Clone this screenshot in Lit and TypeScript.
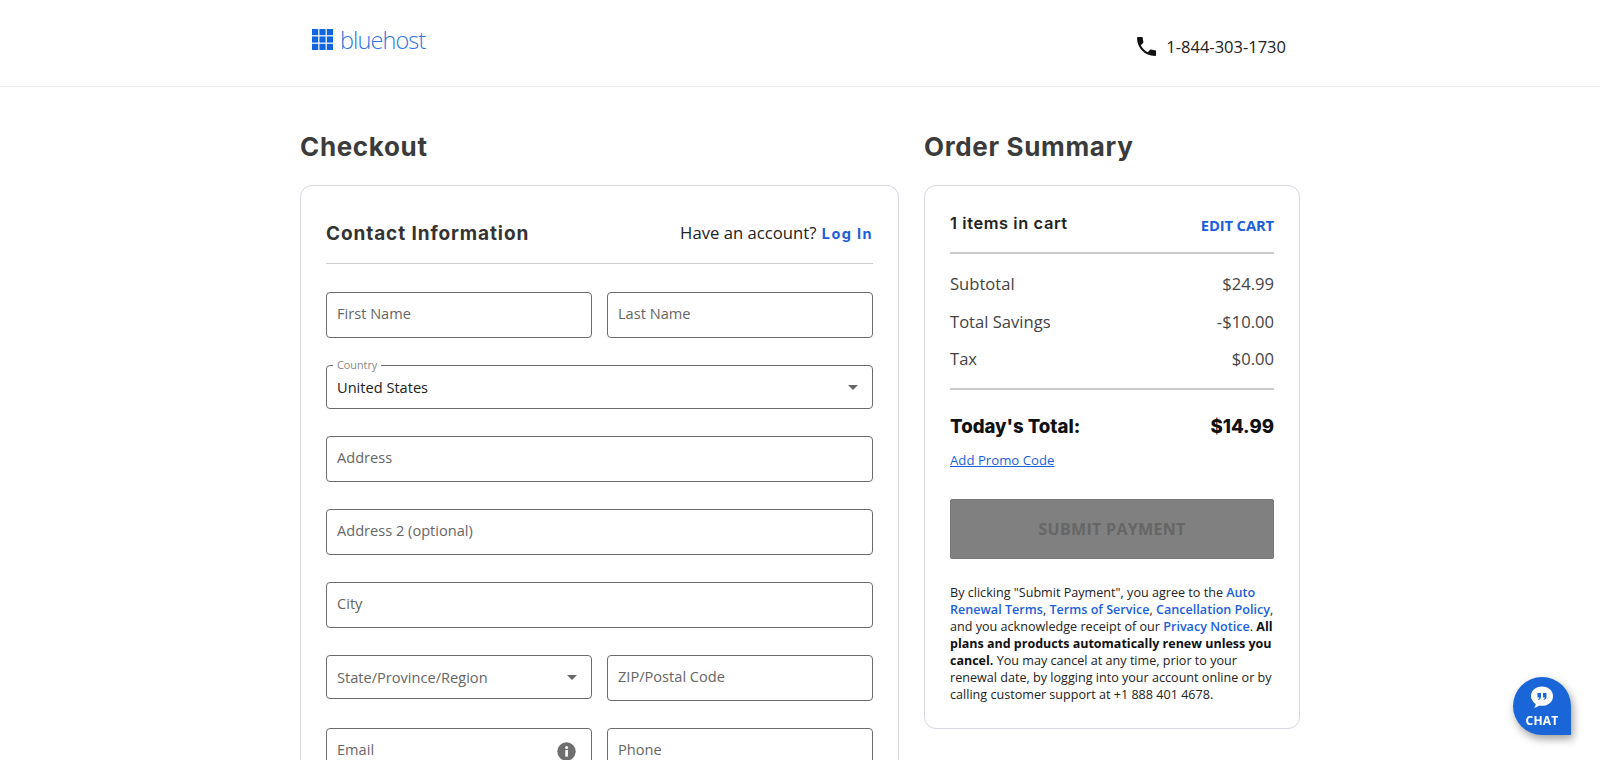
import { LitElement, html, svg, css } from "lit";
import { customElement } from "lit/decorators.js";

@customElement("app-root")
export class AppRoot extends LitElement {
  static styles = css`
    :host { display: block; height: 760px; overflow: hidden; background: #fff; font-family: "Open Sans", sans-serif; color: #333; }
    * { box-sizing: border-box; }
    .top { height: 87px; border-bottom: 1px solid #ebebf3; display: block; }
    .top-in { width: 1000px; margin: 0 auto; display: flex; justify-content: space-between; padding: 29px 14px 0 12px; }
    .logo { display: flex; gap: 7px; align-items: flex-start; }
    .logo svg { display: block; }
    .brand { font-family: "Open Sans", sans-serif; font-weight: 300; font-size: 23.5px; line-height: 22px; color: #2f76df; letter-spacing: -0.9px; }
    .phone { display: flex; align-items: center; gap: 10px; font-size: 16.5px; color: #222; height: 20px; margin-top: 7px; }
    .main { width: 1000px; margin: 0 auto; display: grid; grid-template-columns: 599px 376px; gap: 25px; padding-top: 41px; align-items: start; }
    h1 { margin: 0 0 20px; font-family: "Inter", sans-serif; font-weight: 700; font-size: 26px; line-height: 37px; color: #3b3b3b; letter-spacing: 0.65px; }
    .card { border: 1px solid #d6d6e2; border-radius: 12px; background: #fff; }
    .contact { padding: 33px 25px 40px; height: 700px; }
    .chead { display: flex; justify-content: space-between; align-items: center; height: 30px; padding-bottom: 2px; }
    h2 { margin: 0; font-family: "Inter", sans-serif; font-weight: 700; font-size: 19px; color: #333; letter-spacing: 0.9px; }
    .have { font-size: 16.7px; color: #222; margin-bottom: 2px; }
    .have a { font-family: "Inter", sans-serif; font-weight: 700; font-size: 14.5px; color: #1b5fdc; letter-spacing: 1.4px; margin-left: 1px; }
    .rule { height: 1px; background: #cfcfcf; margin: 14px 0 28px; }
    .form { display: flex; flex-direction: column; gap: 27px; }
    .row { display: grid; grid-template-columns: 265.5px 266px; gap: 15.5px; align-items: start; }
    .f { position: relative; height: 46px; border: 1px solid #6b6b6b; border-radius: 4px; display: flex; align-items: center; padding: 0 10px 4px; font-size: 14.6px; color: #666; }
    .short { height: 44px; padding-bottom: 0; }
    .value { color: #222; padding-bottom: 1px; }
    .legend { position: absolute; top: -8px; left: 6px; background: #fff; padding: 0 4px; font-size: 10.8px; line-height: 14px; color: #888; }
    .arrow { position: absolute; right: 14px; top: 50%; margin-top: -2px; width: 0; height: 0; border-left: 5.5px solid transparent; border-right: 5.5px solid transparent; border-top: 5.5px solid #666; }
    .info { position: absolute; right: 15px; top: 13px; }
    .summary { height: 544px; padding: 0 25px; }
    .shead { display: flex; justify-content: space-between; height: 68px; padding-top: 26px; border-bottom: 2px solid #cacaca; }
    .shead b { font-family: "Inter", sans-serif; font-weight: 600; font-size: 16.4px; line-height: 22px; color: #222; letter-spacing: 0.6px; }
    .shead a { font-weight: 700; font-size: 14.8px; color: #1b5fdc; line-height: 26px; letter-spacing: -0.15px; }
    .lines { padding-top: 11px; border-bottom: 2px solid #cacaca; height: 136px; }
    .line { display: flex; justify-content: space-between; font-size: 16.6px; color: #444; height: 37.5px; align-items: center; }
    .total { display: flex; justify-content: space-between; align-items: center; height: 71px; font-family: "Inter", sans-serif; font-weight: 800; font-size: 18.6px; color: #111; }
    .promo { display: block; font-size: 13.2px; line-height: 18px; color: #1b5fdc; text-decoration: underline; margin-top: -10px; }
    .submit { height: 60px; margin-top: 29.5px; background: #808080; border: 1px solid #777; border-radius: 2px; display: flex; align-items: center; justify-content: center; font-weight: 700; font-size: 16px; letter-spacing: 0.3px; color: #666; }
    .legal { margin: 25px 0 0; font-size: 12.6px; line-height: 17.1px; color: #222; }
    .legal a { color: #1b5fdc; font-weight: 580; }
    .legal b { color: #111; font-weight: 700; font-size: 12.5px; }
    .chat { position: fixed; left: 1513px; top: 677px; width: 58px; height: 58px; background: #1a66d9; border-radius: 50% 50% 0 50%; box-shadow: 2px 4px 8px rgba(0,0,0,.38); display: flex; flex-direction: column; align-items: center; color: #fff; font-weight: 700; font-size: 12px; letter-spacing: .2px; padding-top: 8px; }
    .chat svg { display: block; margin-bottom: 3px; }
  `;

  private logoCells() {
    const c = [];
    for (const y of [0, 7.4, 14.8]) for (const x of [0, 7.4, 14.8]) c.push(svg`<rect x=${x} y=${y} width="6.2" height="6.2" fill="#1166e0"></rect>`);
    return c;
  }

  render() {
    return html`
      <header class="top">
        <div class="top-in">
          <div class="logo">
            <svg width="21" height="21" viewBox="0 0 21 21">${this.logoCells()}</svg>
            <span class="brand">bluehost</span>
          </div>
          <div class="phone">
            <svg width="19" height="19" viewBox="3 3 18 18"><path fill="#111" d="M6.62 10.79c1.44 2.83 3.76 5.14 6.59 6.59l2.2-2.2c.27-.27.67-.36 1.02-.24 1.12.37 2.33.57 3.57.57.55 0 1 .45 1 1V20c0 .55-.45 1-1 1-9.39 0-17-7.61-17-17 0-.55.45-1 1-1h3.5c.55 0 1 .45 1 1 0 1.25.2 2.45.57 3.57.11.35.03.74-.25 1.02l-2.2 2.2z"/></svg>
            <span>1-844-303-1730</span>
          </div>
        </div>
      </header>
      <main class="main">
        <section>
          <h1>Checkout</h1>
          <div class="card contact">
            <div class="chead">
              <h2>Contact Information</h2>
              <span class="have">Have an account? <a>Log In</a></span>
            </div>
            <div class="rule"></div>
            <div class="form">
              <div class="row">
                <div class="f">First Name</div>
                <div class="f">Last Name</div>
              </div>
              <div class="f short value"><span class="legend">Country</span><span>United States</span><i class="arrow"></i></div>
              <div class="f">Address</div>
              <div class="f">Address 2 (optional)</div>
              <div class="f">City</div>
              <div class="row">
                <div class="f short">State/Province/Region<i class="arrow"></i></div>
                <div class="f">ZIP/Postal Code</div>
              </div>
              <div class="row">
                <div class="f">Email
                  <svg class="info" width="19" height="19" viewBox="0 0 19 19"><circle cx="9.5" cy="9.5" r="9.2" fill="#6e6e6e"/><rect x="8.3" y="8" width="2.6" height="6.6" fill="#fff"/><circle cx="9.6" cy="5.4" r="1.5" fill="#fff"/></svg>
                </div>
                <div class="f">Phone</div>
              </div>
            </div>
          </div>
        </section>
        <section>
          <h1>Order Summary</h1>
          <div class="card summary">
            <div class="shead"><b>1 items in cart</b><a>EDIT CART</a></div>
            <div class="lines">
              <div class="line"><span>Subtotal</span><span>$24.99</span></div>
              <div class="line"><span>Total Savings</span><span>-$10.00</span></div>
              <div class="line"><span>Tax</span><span>$0.00</span></div>
            </div>
            <div class="total"><span>Today's Total:</span><span>$14.99</span></div>
            <a class="promo">Add Promo Code</a>
            <div class="submit">SUBMIT PAYMENT</div>
            <p class="legal">By clicking "Submit Payment", you agree to the <a>Auto Renewal Terms</a>, <a>Terms of Service</a>, <a>Cancellation Policy</a>, and you acknowledge receipt of our <a>Privacy Notice</a>. <b>All plans and products automatically renew unless you cancel.</b> You may cancel at any time, prior to your renewal date, by logging into your account online or by calling customer support at +1 888 401 4678.</p>
          </div>
        </section>
      </main>
      <div class="chat">
        <svg width="24" height="24" viewBox="0 0 24 24"><path fill="#fff" d="M12 1.500c6.100 0 11 3.900 11 9.700s-4.900 9.600-11 9.600c-.9 0-1.800-.1-2.600-.2-1.600 1.300-3.400 2-5.400 2.200 1-1.100 1.600-2.400 1.700-3.900C3 17 1 14.400 1 11.200 1 5.400 5.900 1.500 12 1.500z"/><path fill="#1a66d9" d="M7.500 8h3.500v3.500c0 1.800-.9 3-2.600 3.500l-.4-1c.9-.4 1.300-.9 1.400-1.600H7.500zM13 8h3.500v3.500c0 1.800-.9 3-2.600 3.500l-.4-1c.9-.4 1.300-.9 1.400-1.600H13z"/></svg>
        <span>CHAT</span>
      </div>
    `;
  }
}
